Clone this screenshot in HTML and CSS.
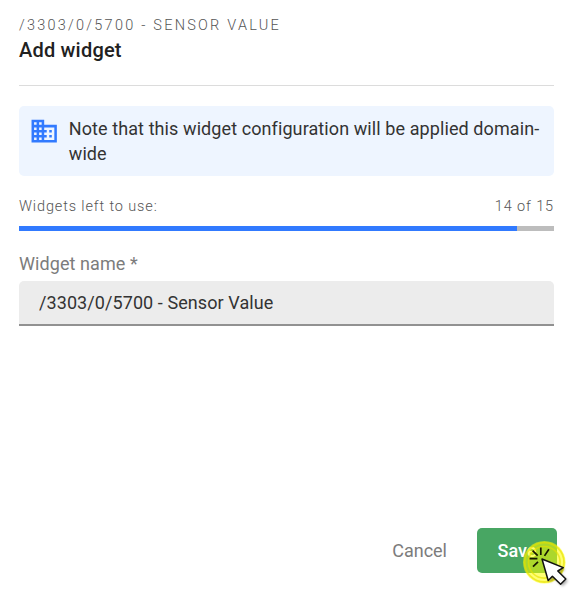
FILE: index.html
```html
<!DOCTYPE html>
<html lang="en">
<head>
<meta charset="utf-8">
<title>Add widget</title>
<link rel="stylesheet" href="styles.css">
</head>
<body>
<main class="dialog">
  <header class="header">
    <div class="eyebrow">/3303/0/5700 - Sensor Value</div>
    <h1 class="title">Add widget</h1>
  </header>
  <section class="note">
    <svg class="note-icon" viewBox="0 0 24 24" aria-hidden="true"><path d="M12 7V3H2v18h20V7H12zM6 19H4v-2h2v2zm0-4H4v-2h2v2zm0-4H4V9h2v2zm0-4H4V5h2v2zm4 12H8v-2h2v2zm0-4H8v-2h2v2zm0-4H8V9h2v2zm0-4H8V5h2v2zm10 12h-8v-2h2v-2h-2v-2h2v-2h-2V9h8v10zm-2-8h-2v2h2v-2zm0 4h-2v2h2v-2z"/></svg>
    <p class="note-text">Note that this widget configuration will be applied domain-wide</p>
  </section>
  <div class="usage"><span>Widgets left to use:</span><span>14 of 15</span></div>
  <div class="progress"><div class="progress-bar" style="width:93%"></div></div>
  <label class="label" for="name">Widget name *</label>
  <input class="input" id="name" type="text" value="/3303/0/5700 - Sensor Value">
  <footer class="actions">
    <button class="btn cancel" type="button">Cancel</button>
    <button class="btn save" type="button">Save</button>
  </footer>
</main>
<svg class="pointer" viewBox="0 0 62 59" aria-hidden="true">
  <circle cx="34.3" cy="32.3" r="21.3" fill="#ff0" fill-opacity=".55"/>
  <circle cx="34.3" cy="32.3" r="19.7" fill="none" stroke="#e6e000" stroke-opacity=".65" stroke-width="1.8"/>
  <circle cx="34.3" cy="32.3" r="15.8" fill="none" stroke="#e6e000" stroke-opacity=".65" stroke-width="1.6"/>
  <path class="rays" d="M30.8 17.5v7.5M38.9 19.3l-4.4 6.6M22.6 20.6l5.1 5M19.6 28.7h7.8M23 36.7l5-4.9"/>
  <path class="arrow-shadow" d="M32 29l6.2 21.5 4.2-4.3 8.2 8 5.2-5.2-8-8 5.5-3.4z"/>
  <path class="arrow" d="M32 29l6.2 21.5 4.2-4.3 8.2 8 5.2-5.2-8-8 5.5-3.4z"/>
</svg>
</body>
</html>
```
FILE: styles.css
```css
* { box-sizing: border-box; }
body {
  margin: 0;
  background: #fff;
  color: #333;
  font-family: Roboto, "Liberation Sans", sans-serif;
  font-size: 18px;
}
.dialog {
  display: flex;
  flex-direction: column;
  height: 589px;
  padding: 15px 18px 16px 19px;
  overflow: hidden;
}
.header {
  height: 71px;
  border-bottom: 1px solid #dcdcdc;
}
.eyebrow {
  padding-top: 1px;
  color: #555;
  font-size: 14.5px;
  font-weight: 300;
  line-height: 20px;
  letter-spacing: 2.23px;
  text-transform: uppercase;
}
.title {
  margin: 2px 0 0;
  color: #212121;
  font-size: 20px;
  font-weight: 500;
  line-height: 24px;
  letter-spacing: .2px;
}
.note {
  display: flex;
  gap: 9.4px;
  height: 70px;
  margin-top: 20px;
  padding: 10px;
  border-radius: 5px;
  background: #eef5ff;
}
.note-icon {
  flex: none;
  width: 30.4px;
  height: 30.4px;
  fill: #317aff;
}
.note-text {
  margin: 0;
  line-height: 25px;
  letter-spacing: .09px;
}
.usage {
  display: flex;
  justify-content: space-between;
  margin-top: 21px;
  color: #555;
  font-size: 14.5px;
  font-weight: 300;
  line-height: 20px;
  letter-spacing: .87px;
}
.progress {
  height: 5px;
  margin-top: 9px;
  background: #bdbdbd;
}
.progress-bar {
  height: 5px;
  background: #317aff;
}
.label {
  margin-top: 21px;
  color: #7c7c7c;
  line-height: 24px;
  letter-spacing: .08px;
}
.input {
  width: 100%;
  height: 45px;
  margin-top: 5px;
  padding: 0 20px;
  border: 0;
  border-bottom: 2px solid #919191;
  border-radius: 5px 5px 0 0;
  background: #ececec;
  color: #333;
  font: inherit;
  letter-spacing: .08px;
}
.actions {
  display: flex;
  justify-content: flex-end;
  gap: 10px;
  margin: auto -3px 0 0;
}
.btn {
  height: 45px;
  padding: 0 20px;
  border: 0;
  border-radius: 5px;
  background: none;
  color: #7c7c7c;
  font: inherit;
}
.save {
  width: 80px;
  background: #48a663;
  color: #fff;
  font-weight: 500;
}
.pointer {
  position: absolute;
  left: 510px;
  top: 530px;
  width: 62px;
  height: 59px;
}
.rays {
  fill: none;
  stroke: #171700;
  stroke-width: 1.7;
}
.arrow {
  fill: #fff;
  stroke: #111;
  stroke-width: 1.5;
  stroke-linejoin: round;
}
.arrow-shadow {
  fill: #000;
  opacity: .35;
  filter: blur(1.5px);
  transform: translate(2px, 2px);
}
```
